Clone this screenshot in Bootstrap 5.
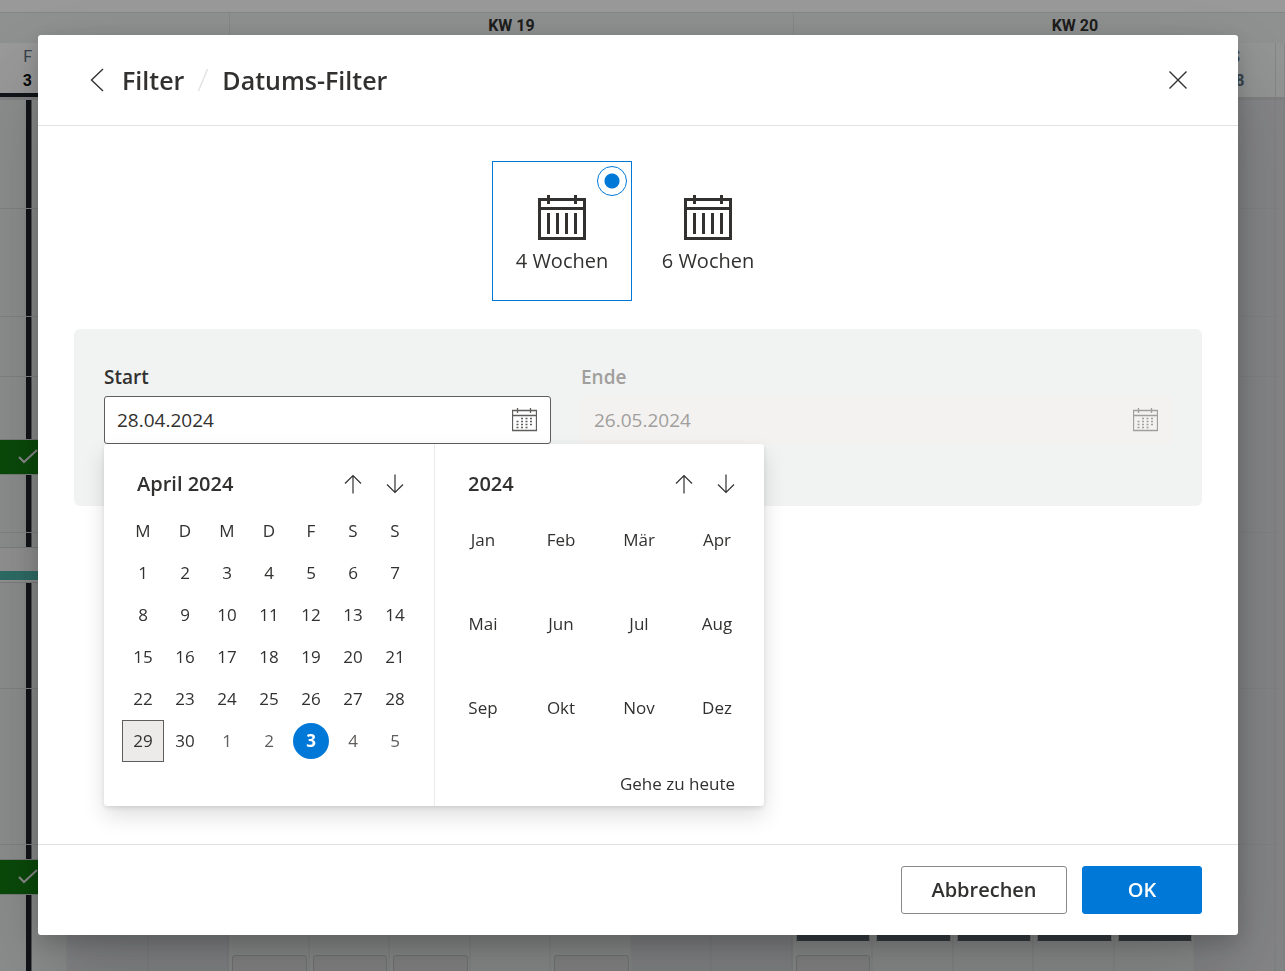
<!DOCTYPE html>
<html lang="de">
<head>
<meta charset="utf-8">
<meta name="viewport" content="width=device-width, initial-scale=1">
<title>Datums-Filter</title>
<link href="https://cdn.jsdelivr.net/npm/bootstrap@5.3.0/dist/css/bootstrap.min.css" rel="stylesheet">
<style>
:root { --blue: #0078d7; --ink: #323130; --rule: #e1e3e3; }
body { font-family: "Open Sans", "Noto Sans", sans-serif; font-size: 19px; line-height: 24px; color: var(--ink); overflow: hidden; }

/* schedule behind the dialog */
.board { height: 100vh; overflow: hidden; font-family: Roboto, sans-serif; background: #e8edeb; }
.board-top { height: 13px; background: #fff; border-bottom: 1px solid #dadfdd; }
.lane { display: grid; grid-template-columns: 136fr repeat(15, 161fr) 18fr; }
.weeks { height: 30px; background: #edf2f0; font-size: 16px; line-height: 26px; font-weight: 700; text-align: center; }
.week { grid-column: span 7; border-left: 1px solid #dce1df; }
.week:last-child { margin-right: -71px; }
.week-before { grid-column: span 3; }
.days { height: 57px; background: #fff; border-bottom: 4px solid #d6d6d6; font-size: 16px; text-align: center; }
.day { border-right: 1px solid #dce1df; padding-top: 2px; background: #f5f9f7; color: #5b6f80; }
.day b { display: block; }
.day.now { background: #fff; border-bottom: 4px solid #1c2228; text-align: right; padding-right: 35px; }
.day.now b { color: #111; }
.slot { border-right: 2px solid #e0e4e3; border-bottom: 1px solid #d6dad9; }
.slot.off { background: #dedfe3; border-color: #d7d9dc; }
.slot.now { background: linear-gradient(to left, transparent 34px, #8a8e90 34px 35px, #1c2228 35px 40px, transparent 40px) #e8edeb; }
.h-a { height: 109px; } .h-b { height: 108px; } .h-c { height: 60px; } .h-d { height: 156px; }
.booked { height: 36px; background: #107c10; border: solid #c8cecb; border-width: 1px 0; margin-right: 28px; text-align: right; line-height: 0; }
.at-low { margin-top: 62px; } .at-high { margin-top: 14px; }
.shift { height: 36px; background: #f3f3f3; border: solid #cfd3d1; border-width: 1px 0; padding-top: 23px; margin-right: 10px; }
.shift-bar { height: 9px; background: #4db6ac; }
.task-dark { height: 98px; margin: 0 1px 0 3px; background: #56626b; border: 1px solid #c8c8c8; border-bottom: 2px solid #eee; border-radius: 2px; }
.task { height: 24px; margin: 12px 1px 0 3px; background: #e0e0e0; border: 1px solid #c3c7c5; border-radius: 3px; }
.task.alone { margin-top: 110px; }

/* dialog */
.modal-backdrop { --bs-backdrop-opacity: .4; }
.modal { padding-right: 9px; overflow: hidden; }
.filter-dialog { max-width: 1200px; margin: 0 auto; height: 100%; padding: 35px 0 36px; }
.filter-dialog .modal-content { height: 100%; border: 0; border-radius: 3px; box-shadow: 0 38px 86px rgba(0,0,0,.22), 0 7px 22px rgba(0,0,0,.18); color: var(--ink); }
.modal-header { height: 91px; padding: 0 48px 0 46px; border-color: var(--rule); }
.modal-header h1 { font-size: 25px; line-height: 36px; font-weight: 600; }
.slash { margin: 0 14px; }
.crumb { color: inherit; text-decoration: none; }
.icon-btn { width: 42px; height: 42px; padding: 0; border: 0; background: none; display: grid; place-items: center; color: var(--ink); }
.back-btn { width: 26px; }
.close-btn { width: 24px; }
.modal-body { padding: 35px 36px; }
.modal-footer { height: 91px; padding: 0 36px; gap: 15px; border-color: var(--rule); }
.modal-footer > * { margin: 0; }
.modal-footer .btn { height: 48px; padding: 0; font-size: 20px; font-weight: 600; border-radius: 3px; }
.btn-cancel { width: 166px; color: var(--ink); background: #fff; border: 1px solid #8a8886; }
.btn-ok { width: 120px; color: #fff; background: var(--blue); border: 1px solid var(--blue); }

.choice { width: 140px; height: 140px; margin-right: 6px; border: 1px solid transparent; padding-top: 33px; text-align: center; cursor: pointer; font-size: 20px; line-height: 28px; }
.choice:has(:checked) { border-color: var(--blue); }
.choice input { position: absolute; top: 4px; right: 4px; width: 30px; height: 30px; margin: 0; appearance: none; border: 1px solid var(--blue); border-radius: 50%; background: radial-gradient(circle, var(--blue) 7px, #fff 8px); }
.choice input:not(:checked) { opacity: 0; }
.choice svg { display: block; margin: 0 auto 7px; }

.dates { margin-top: 28px; padding: 30px 30px 62px; background: #f0f3f2; border-radius: 6px; display: grid; grid-template-columns: 447fr 591fr; column-gap: 30px; }
.dates label { height: 37px; line-height: 36px; font-weight: 600; display: block; }
.date-box { height: 48px; border: 1px solid #605e5c; border-radius: 3px; background: #fff; padding: 0 13px 0 12px; }
.date-box input { border: 0; background: none; padding: 0; width: 100%; height: 46px; color: inherit; outline: 0; }
.date-box .icon-btn { width: 27px; color: #605e5c; }
.disabled-field { color: #a19f9d; }
.disabled-field .date-box { background: #f3f2f1; border-color: #f3f2f1; }
.disabled-field .date-box .icon-btn { color: #a19f9d; }

.picker { position: absolute; top: 100%; left: 0; width: 660px; height: 362px; background: #fff; border-radius: 3px; box-shadow: 0 10px 22px rgba(0,0,0,.13), 0 2px 5px rgba(0,0,0,.11); z-index: 2; font-size: 17px; }
.pane { width: 330px; padding: 18px 18px 0; }
.pane + .pane { border-left: 1px solid #edebe9; padding: 18px 17px 0 18px; }
.pane-head { height: 43px; margin-bottom: 5px; padding-left: 15px; font-size: 20px; font-weight: 600; }
.days-table { border-collapse: collapse; table-layout: fixed; width: 294px; }
.days-table th, .days-table td { height: 42px; padding: 0; text-align: center; font-weight: 400; }
.days-table button, .month { width: 42px; height: 42px; padding: 0; border: 0; background: none; color: inherit; }
.days-table .out { color: #605e5c; }
.days-table .picked { background: #edebe9; border: 1px solid #605e5c; }
.days-table .today { width: 36px; height: 36px; border-radius: 50%; background: var(--blue); color: #fff; font-weight: 700; }
.months { display: grid; grid-template-columns: repeat(4, 60px); gap: 24px 18px; }
.month { width: 60px; height: 60px; }
.go-today { color: inherit; text-decoration: none; margin: 34px 12px 0 0; float: right; }
</style>
</head>
<body>
<div class="board" aria-hidden="true">
  <div class="board-top"></div>
  <div class="lane weeks"><div class="week-before"></div><div class="week">KW 19</div><div class="week">KW 20</div></div>
  <div class="lane days" id="days"></div>
  <div id="lanes"></div>
</div>
<div class="modal-backdrop show"></div>

<div class="modal d-block" role="dialog" aria-modal="true" aria-labelledby="dlgTitle">
  <div class="modal-dialog filter-dialog">
    <div class="modal-content">
      <div class="modal-header d-flex align-items-center">
        <div class="d-flex align-items-center">
          <button class="icon-btn back-btn" type="button" aria-label="Zurück"><svg width="14" height="24" viewBox="0 0 14 24" fill="none" stroke="currentColor" stroke-width="1.4"><path d="M13 1 1.500 12 13 23"/></svg></button>
          <h1 class="mb-0 d-flex align-items-center" id="dlgTitle"><a class="crumb ms-2 ps-1" href="#">Filter</a>
            <svg class="slash" width="10" height="24" viewBox="0 0 10 24" stroke="#e1e4e3" stroke-width="1.500"><path d="M9.500 1 .5 23"/></svg>
            <span>Datums-Filter</span></h1>
        </div>
        <button class="icon-btn close-btn" type="button" aria-label="Schließen"><svg width="18" height="18" viewBox="0 0 18 18" stroke="currentColor" stroke-width="1.4"><path d="M.5.5l17 17M17.500.5l-17 17"/></svg></button>
      </div>

      <div class="modal-body">
        <div class="d-flex justify-content-center">
          <label class="choice position-relative"><input type="radio" name="span" checked>
            <svg width="48" height="45" viewBox="0 0 48 45" fill="none" stroke="#323130" stroke-width="3"><path d="M1.500 4.500h45v39h-45zM0 13.500h48M10.500 0v9M37.500 0v9M10.500 18v21M19.500 18v21M28.500 18v21M37.500 18v21"/></svg>4 Wochen</label>
          <label class="choice position-relative"><input type="radio" name="span">
            <svg width="48" height="45" viewBox="0 0 48 45" fill="none" stroke="#323130" stroke-width="3"><path d="M1.500 4.500h45v39h-45zM0 13.500h48M10.500 0v9M37.500 0v9M10.500 18v21M19.500 18v21M28.500 18v21M37.500 18v21"/></svg>6 Wochen</label>
        </div>

        <div class="dates">
          <div>
            <label for="start">Start</label>
            <div class="position-relative">
              <div class="date-box d-flex align-items-center">
                <input id="start" type="text" value="28.04.2024">
                <button class="icon-btn" type="button" aria-label="Kalender öffnen"><svg width="25" height="24" viewBox="0 0 25 24" fill="none" stroke="currentColor"><path d="M.5 2.500h24v20H.5zM0 7.500h25M5.500 0v5M18.500 0v5" stroke-width="1.300"/><path d="M9 10.500h2m2.500 0h2m2.500 0h2M4.500 13.500h2m2.500 0h2m2.500 0h2m2.500 0h2M4.500 16.500h2m2.500 0h2m2.500 0h2m2.500 0h2M4.500 19.500h2m2.500 0h2m2.500 0h2" stroke-width="1.500"/></svg></button>
              </div>
              <div class="picker d-flex">
                <div class="pane">
                  <div class="pane-head d-flex align-items-center"><span class="me-auto">April 2024</span>
                    <button class="icon-btn" type="button" aria-label="Voriger Monat"><svg width="18" height="20" viewBox="0 0 18 20" fill="none" stroke="currentColor" stroke-width="1.2"><path d="M9 19.500V1.500M1 9.500l8-8 8 8"/></svg></button>
                    <button class="icon-btn" type="button" aria-label="Nächster Monat"><svg width="18" height="20" viewBox="0 0 18 20" fill="none" stroke="currentColor" stroke-width="1.2"><path d="M9 .5v18M1 10.500l8 8 8-8"/></svg></button></div>
                  <table class="days-table"><thead><tr><th>M</th><th>D</th><th>M</th><th>D</th><th>F</th><th>S</th><th>S</th></tr></thead><tbody id="month"></tbody></table>
                </div>
                <div class="pane">
                  <div class="pane-head d-flex align-items-center"><span class="me-auto">2024</span>
                    <button class="icon-btn" type="button" aria-label="Voriges Jahr"><svg width="18" height="20" viewBox="0 0 18 20" fill="none" stroke="currentColor" stroke-width="1.2"><path d="M9 19.500V1.500M1 9.500l8-8 8 8"/></svg></button>
                    <button class="icon-btn" type="button" aria-label="Nächstes Jahr"><svg width="18" height="20" viewBox="0 0 18 20" fill="none" stroke="currentColor" stroke-width="1.2"><path d="M9 .5v18M1 10.500l8 8 8-8"/></svg></button></div>
                  <div class="months" id="months"></div>
                  <a class="go-today" href="#">Gehe zu heute</a>
                </div>
              </div>
            </div>
          </div>
          <div class="disabled-field">
            <label for="end">Ende</label>
            <div class="date-box d-flex align-items-center">
              <input id="end" type="text" value="26.05.2024" disabled>
              <button class="icon-btn" type="button" disabled aria-label="Kalender öffnen"><svg width="25" height="24" viewBox="0 0 25 24" fill="none" stroke="currentColor"><path d="M.5 2.500h24v20H.5zM0 7.500h25M5.500 0v5M18.500 0v5" stroke-width="1.300"/><path d="M9 10.500h2m2.500 0h2m2.500 0h2M4.500 13.500h2m2.500 0h2m2.500 0h2m2.500 0h2M4.500 16.500h2m2.500 0h2m2.500 0h2m2.500 0h2M4.500 19.500h2m2.500 0h2m2.500 0h2" stroke-width="1.500"/></svg></button>
            </div>
          </div>
        </div>
      </div>

      <div class="modal-footer">
        <button class="btn btn-cancel" type="button">Abbrechen</button>
        <button class="btn btn-ok" type="button">OK</button>
      </div>
    </div>
  </div>
</div>

<script src="https://cdn.jsdelivr.net/npm/bootstrap@5.3.0/dist/js/bootstrap.bundle.min.js"></script>
<script>
// The schedule opens on Friday the 3rd; weekends are shaded.
// Only the outer days carry a label, the dialog covers the others.
const labels = { 0: ['F', 3], 15: ['S', 18] };
const off = i => i % 7 === 1 || i % 7 === 2;
const cols = [...Array(17).keys()];
document.getElementById('days').innerHTML = cols.map(i =>
  `<div class="day${i ? '' : ' now'}">${labels[i] ? labels[i][0] + '<b>' + labels[i][1] + '</b>' : ''}</div>`).join('');

const check = '<svg width="20" height="34" viewBox="0 0 20 34" fill="none" stroke="#e6e6e6" stroke-width="2"><path d="M1 17l5 5L19 10"/></svg>';
const lanes = [
  ['h-a'], ['h-b'], ['h-c'],
  ['h-d', `<div class="booked at-low">${check}</div>`],
  ['h-d', '<div class="shift at-high"><div class="shift-bar"></div></div>'],
  ['h-d'],
  ['h-d', `<div class="booked at-high">${check}</div>`, true]
];
const tasks = i => {
  if (i >= 10 && i <= 14) return '<div class="task-dark"></div>' + (i === 10 ? '<div class="task"></div>' : '');
  return [3, 4, 5, 7].includes(i) ? '<div class="task alone"></div>' : '';
};
document.getElementById('lanes').innerHTML = lanes.map(([h, first = '', last]) =>
  `<div class="lane ${h}">` + cols.map(i =>
    `<div class="slot${i ? '' : ' now'}${off(i) ? ' off' : ''}">${i ? (last ? tasks(i) : '') : '<div class="overflow-hidden">' + first + '</div>'}</div>`).join('') + '</div>').join('');

let rows = '';
for (let w = 0; w < 5; w++) {
  rows += '<tr>';
  for (let d = 1; d <= 7; d++) {
    const n = w * 7 + d, c = n === 29 ? 'picked' : n === 33 ? 'today' : n > 30 ? 'out' : '';
    rows += `<td><button type="button" class="${c}">${n > 30 ? n - 30 : n}</button></td>`;
  }
  rows += '</tr>';
}
document.getElementById('month').innerHTML = rows;
document.getElementById('months').innerHTML = 'Jan Feb Mär Apr Mai Jun Jul Aug Sep Okt Nov Dez'.split(' ')
  .map(m => `<button type="button" class="month">${m}</button>`).join('');
</script>
</body>
</html>
